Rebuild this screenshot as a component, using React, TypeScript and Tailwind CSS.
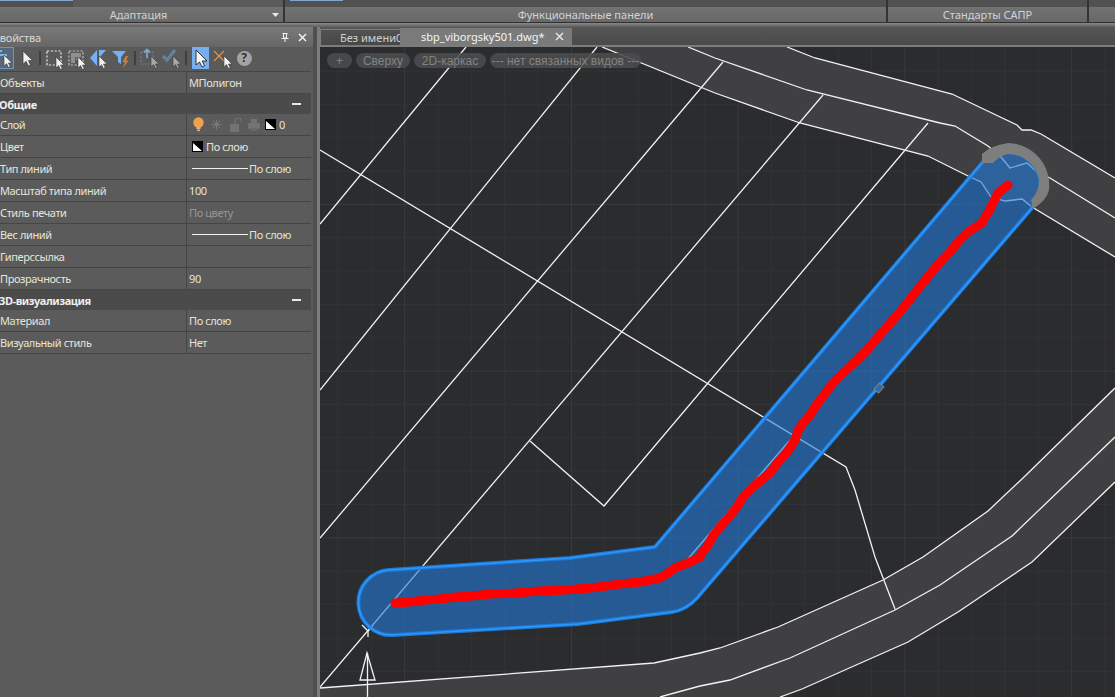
const FONT = "font-['Noto_Sans',sans-serif]";

const Cur = ({ x = 11, y = 8, s = 1, fill = "#f2f2f2" }: { x?: number; y?: number; s?: number; fill?: string }) => (
  <path
    transform={`translate(${x} ${y}) scale(${s})`}
    d="M0 0 L0 11 L2.6 8.6 L4.4 12.5 L6.2 11.6 L4.5 8 L8 8 Z"
    fill={fill}
    stroke="#3a3a3a"
    strokeWidth="0.6"
  />
);

const Ico = ({ children }: { children: React.ReactNode }) => (
  <svg width="22" height="22" viewBox="0 0 22 22" className="shrink-0 overflow-visible">
    <g transform="translate(3 0)">{children}</g>
  </svg>
);

const Sep = () => <div className="w-[2px] h-[14px] bg-[#3f3f3f] mx-[2.5px] shrink-0 self-center" />;

const Toolbar = () => (
  <div className="h-[24px] pb-[2px] flex items-center -ml-[8px] bg-[#5a5a5a]">
    <div className="relative w-[22px] h-[22px] shrink-0 bg-[#58677a] border border-[#6f94bd]">
      <svg width="20" height="20" viewBox="0 0 20 20" className="absolute left-0 top-0">
        <rect x="6" y="2" width="3" height="2" fill="#79b4f5" />
        <rect x="0" y="6" width="14" height="2" fill="#79b4f5" />
        <Cur x={11} y={7} />
      </svg>
    </div>
    <Ico>
      <Cur x={6} y={4} s={1.2} />
    </Ico>
    <Sep />
    <Ico>
      <rect x="1" y="4" width="14" height="14" fill="none" stroke="#e6e6e6" strokeWidth="1.2" strokeDasharray="2.2 1.6" />
      <Cur x={10} y={10} />
    </Ico>
    <Ico>
      <rect x="1" y="4" width="14" height="14" fill="none" stroke="#bdbdbd" strokeWidth="1.2" strokeDasharray="2.2 1.6" />
      <rect x="3" y="6" width="10" height="4" fill="#8f8f8f" />
      <rect x="3" y="10" width="4" height="6" fill="#8f8f8f" />
      <rect x="8" y="10" width="4" height="3" fill="#777" />
      <Cur x={10} y={10} />
    </Ico>
    <Ico>
      <path d="M0 11 L7 3 L7 19 Z" fill="#74b0f5" />
      <path d="M9 3 L16 3 L9 11 Z" fill="#74b0f5" />
      <path d="M10 19 L15 19 L10 15 Z" fill="#74b0f5" />
      <Cur x={9} y={9} />
    </Ico>
    <Ico>
      <path d="M0 4 L14 4 L9 10 L9 17 L6 15 L6 10 Z" fill="#74b0f5" />
      <path d="M14 9 L10.5 15 L13 15 L11 21 L16.5 13.5 L14 13.5 L16 9 Z" fill="#c9853c" />
    </Ico>
    <Sep />
    <Ico>
      <rect x="0" y="5" width="12" height="12" fill="none" stroke="#6f8197" strokeWidth="1.1" strokeDasharray="2.2 1.6" />
      <path d="M6 11 L6 3 M3 5.5 L6 2.5 L9 5.5" fill="none" stroke="#7fa3cc" strokeWidth="1.8" />
      <Cur x={10} y={9} fill="#a8a8a8" />
    </Ico>
    <Ico>
      <path d="M0 9 L4 13 L12 3" fill="none" stroke="#64809f" strokeWidth="3.2" />
      <Cur x={10} y={9} fill="#a8a8a8" />
    </Ico>
    <Sep />
    <div className="relative w-[17px] h-[22px] shrink-0 bg-[#76aef0] mx-[2.5px]">
      <svg width="17" height="22" viewBox="0 0 17 22" className="absolute left-0 top-0">
        <path
          d="M4 3 L4 18 L7.5 15 L10 20 L12.5 18.8 L10.2 14 L15 14 Z"
          fill="#f5f5f5"
          stroke="#222"
          strokeWidth="0.9"
        />
      </svg>
    </div>
    <Ico>
      <path d="M0 4 L10 14 M10 4 L0 14" stroke="#e8944a" strokeWidth="1.1" fill="none" />
      <Cur x={10} y={9} />
    </Ico>
    <div className="w-[22px] h-[22px] flex items-center justify-center shrink-0">
      <div className="w-[15px] h-[15px] rounded-full bg-[#a3a3a3] flex items-center justify-center text-[12px] font-bold text-[#333] leading-none">
        ?
      </div>
    </div>
  </div>
);

const Swatch = () => (
  <svg width="11" height="11" viewBox="0 0 11 11" className="shrink-0">
    <rect width="11" height="11" fill="#000" />
    <path d="M1 2 L10 10 L1 10 Z" fill="#fff" />
  </svg>
);

const Val = ({ children, c = "text-[#e4e4d8]" }: { children: React.ReactNode; c?: string }) => (
  <div className={`pl-[2px] h-full flex items-center ${c}`}>{children}</div>
);

const LineVal = () => (
  <div className="flex items-center h-full pl-[5px]">
    <div className="w-[56px] h-px bg-[#f0f0f0] -mt-px" />
    <span className="ml-px text-[#e4e4d8]">По слою</span>
  </div>
);

const Row = ({ k, children }: { k: string; children?: React.ReactNode }) => (
  <div className="grid grid-cols-[186px_125px] h-[22px] border-b border-[#454545] tracking-[-0.4px]">
    <div className="flex items-center text-[#e6e6da] whitespace-nowrap overflow-hidden">{k}</div>
    <div className="border-l border-[#454545]">{children}</div>
  </div>
);

const Group = ({ t }: { t: string }) => (
  <div className="h-[20px] w-[311px] flex items-center justify-between bg-[#4b4b4b] font-bold text-[#eeeeee] pr-[10px] tracking-[-0.4px]">
    <span className="-ml-px">{t}</span>
    <span className="w-[9px] h-[2px] bg-[#e8e8e8]" />
  </div>
);

const Layer = () => (
  <div className="flex items-center h-full pl-[5px] gap-[6px]">
    <svg width="13" height="15" viewBox="0 0 13 15" className="shrink-0">
      <circle cx="6.5" cy="5.5" r="5.2" fill="#f0a04f" />
      <rect x="4.5" y="10" width="4" height="2" fill="#d9b27c" />
      <rect x="5" y="12.5" width="3" height="1.6" fill="#c8b896" />
    </svg>
    <svg width="11" height="11" viewBox="0 0 11 11" className="shrink-0">
      <path d="M5.5 0.5 V10.5 M0.5 5.5 H10.5 M2 2 L9 9 M9 2 L2 9" stroke="#7a7a7a" strokeWidth="1" />
    </svg>
    <svg width="12" height="14" viewBox="0 0 12 14" className="shrink-0 ml-[2px]">
      <path d="M5 6 V3 a3 3 0 0 1 6 0" fill="none" stroke="#737373" strokeWidth="1.2" />
      <rect x="0" y="6" width="9" height="8" fill="#737373" />
    </svg>
    <svg width="12" height="12" viewBox="0 0 12 12" className="shrink-0">
      <rect x="3" y="0" width="6" height="5" fill="#737373" />
      <rect x="0" y="4" width="12" height="6" rx="1" fill="#737373" />
      <rect x="3" y="9" width="6" height="3" fill="#6a6a6a" />
    </svg>
    <div className="flex items-center gap-[3px] -ml-px">
      <Swatch />
      <span className="text-[#e4e4d8]">0</span>
    </div>
  </div>
);

const Panel = () => (
  <div className="w-[313px] shrink-0 bg-[#5b5b5b] overflow-hidden">
    <div className="h-[20px] flex items-center justify-between bg-gradient-to-b from-[#7a7a7a] to-[#666666] pr-[6px]">
      <span className="-ml-[7px] text-[#d8d8d8] tracking-[-0.2px]">Свойства</span>
      <div className="flex items-center gap-[9px]">
        <svg width="8" height="9" viewBox="0 0 8 9">
          <path d="M1.5 0.5 H6.5 M2.5 0.5 V5 H5.5 V0.5 M0.5 5.5 H7.5 M4 5.5 V9" stroke="#f2f2f2" fill="none" />
        </svg>
        <svg width="9" height="9" viewBox="0 0 9 9">
          <path d="M1 1 L8 8 M8 1 L1 8" stroke="#f2f2f2" strokeWidth="1.5" />
        </svg>
      </div>
    </div>
    <Toolbar />
    <div className="w-[311px] border-t border-[#454545]">
      <Row k="Объекты">
        <Val>МПолигон</Val>
      </Row>
      <Group t="Общие" />
      <Row k="Слой">
        <Layer />
      </Row>
      <Row k="Цвет">
        <div className="flex items-center h-full pl-[5px] gap-[3px]">
          <Swatch />
          <span className="text-[#e4e4d8]">По слою</span>
        </div>
      </Row>
      <Row k="Тип линий">
        <LineVal />
      </Row>
      <Row k="Масштаб типа линий">
        <Val>100</Val>
      </Row>
      <Row k="Стиль печати">
        <Val c="text-[#969696]">По цвету</Val>
      </Row>
      <Row k="Вес линий">
        <LineVal />
      </Row>
      <Row k="Гиперссылка" />
      <Row k="Прозрачность">
        <Val>90</Val>
      </Row>
      <Group t="3D-визуализация" />
      <Row k="Материал">
        <Val>По слою</Val>
      </Row>
      <Row k="Визуальный стиль">
        <Val>Нет</Val>
      </Row>
    </div>
  </div>
);

const Ribbon = () => {
  const cell = "h-[23px] flex flex-col border-r-2 border-[#333333]";
  const label =
    "flex-1 flex items-center justify-center bg-gradient-to-b from-[#727272] to-[#686868] text-[#cfd3d6] border-b border-[#303030]";
  return (
    <div className="flex h-[23px] bg-[#5a5a5a]">
      <div className={`${cell} w-[285px]`}>
        <div className="h-[7px] bg-[#515151] border-t border-[#7fa5d0] mr-[210px]" />
        <div className="relative flex-1 flex flex-col">
          <div className={`${label} relative pr-[6px]`}>
            Адаптация
            <svg width="7" height="4" viewBox="0 0 7 4" className="absolute right-[4px] top-[6px]">
              <path d="M0 0 H7 L3.5 4 Z" fill="#e8e8e8" />
            </svg>
          </div>
        </div>
      </div>
      <div className={`${cell} w-[603px]`}>
        <div className="h-[7px] bg-[#515151] flex">
          <div className="w-[53px] h-px ml-[5px] bg-[#7fa5d0]" />
        </div>
        <div className={label}>Функциональные панели</div>
      </div>
      <div className={`${cell} w-[201px]`}>
        <div className="h-[7px] bg-[#515151]" />
        <div className={label}>Стандарты САПР</div>
      </div>
      <div className="h-[23px] flex-1 flex flex-col">
        <div className="h-[7px] bg-[#515151]" />
        <div className={label} />
      </div>
    </div>
  );
};

const Tabs = () => (
  <div className="h-[20px] flex items-end bg-gradient-to-b from-[#565656] to-[#4a4a4a] border-b-2 border-[#7c7c7c]">
    <div className="h-[16px] w-[80px] pl-[19px] flex items-center bg-gradient-to-b from-[#525252] to-[#474747] border-l border-t border-[#7c7c7c] text-[#cfcfcf] overflow-hidden whitespace-nowrap">
      Без имени0
    </div>
    <div className="h-[17px] w-[172px] pl-[21px] pr-[8px] flex items-center justify-between bg-[#7a7a7a] text-[#f4f4f4]">
      <span>sbp_viborgsky501.dwg*</span>
      <svg width="9" height="9" viewBox="0 0 9 9">
        <path d="M1 1 L8 8 M8 1 L1 8" stroke="#f2f2f2" strokeWidth="1.2" />
      </svg>
    </div>
  </div>
);

const Pill = ({ children, w }: { children: React.ReactNode; w: string }) => (
  <div className={`h-[15px] ${w} rounded-full bg-[#4a4b4c]/90 flex items-center justify-center text-[#838383] whitespace-nowrap font-['Liberation_Sans',sans-serif] text-[12px]`}>
    {children}
  </div>
);

const vx = Array.from({ length: 24 }, (_, i) => 338 + i * 33.35);
const hy = Array.from({ length: 20 }, (_, i) => 71 + i * 33.35);

const lineA = "787,47 815,58 952,94 1017,125 1022,130 1031,130 1041,134 1115,178";
const lineB = "688,47 715,58 807,90 940,123 955,126 988,146 1001,157 1010,168 1027,163 1037,172 1050,178 1115,218";
const lineC = "602,47 715,93 800,123 928,156 970,177 981,182 991,197 1005,201 1022,199 1032,207 1115,257";
const b1 = "320,688 654,663 700,653 720,648 778,627 883,580 923,557 988,511 1023,478 1115,388";
const b2 = "660,697 700,686 730,680 790,658 895,610 940,585 1012,536 1115,437";
const b3 = "780,697 802,689 908,642 958,612 1032,562 1115,482";
const rev = (s: string) => s.split(" ").reverse().join(" ");

const red =
  "395,603 410,602 425,600 440,599 455,597 472,596 490,594 515,593 540,591 565,590 590,588 606,586 620,584 640,582 660,578 668,573 675,568 690,562 700,557 703,551 707,547 713,536 720,527 729,517 737,507 743,497 750,490 760,481 770,473 775,466 780,460 788,451 795,440 798,431 803,423 810,415 815,407 824,395 833,383 838,378 843,373 855,362 867,350 884,330 900,312 918,289 935,268 948,254 960,240 968,232 982,223 985,217 988,213 993,203 998,193 1003,189 1008,185";

const blue =
  "M655 547 L982 163 A33.6 33.6 0 0 1 1032 208 L697 598 Q686 610 672 612 L578 624 L393 635 A32 32 0 0 1 389 570 L570 558 Z";

const Drawing = () => (
  <svg viewBox="320 47 795 650" className="block w-full h-full">
    <rect x="320" y="47" width="795" height="650" fill="#2b2c2e" />
    {vx.map((x, i) => (
      <line key={i} x1={x} y1="47" x2={x} y2="697" stroke={i % 5 === 2 ? "#3a3b43" : "#323338"} strokeWidth="1" />
    ))}
    {hy.map((y, i) => (
      <line key={i} x1="320" y1={y} x2="1115" y2={y} stroke={i % 5 === 4 ? "#3a3b43" : "#323338"} strokeWidth="1" />
    ))}
    <polygon points={`${lineA} 1115,257 ${rev(lineC)}`} fill="#404042" />
    <polygon points={`${b1} 1115,482 ${rev(b3)} 320,697`} fill="#404042" />
    <g fill="none" stroke="#f2f2f2" strokeWidth="1.3">
      <polyline points={lineA} />
      <polyline points={lineB} />
      <polyline points={lineC} />
      <polyline points={b1} />
      <polyline points={b2} />
      <polyline points={b3} />
      <polyline points="466,47 320,224" />
      <polyline points="597,47 320,390" />
      <polyline points="723,62 320,538" />
      <polyline points="823,95 320,687" />
      <polyline points="928,123 604,506 530,441" />
      <polyline points="790,440 687,560" />
      <polyline points="320,150 846,467 855,490 875,557 895,609" />
      <polyline points="362,625 368,631 373,626" />
      <polyline points="368,631 368,637" />
      <polygon points="367,653 360,680 375,680" />
      <line x1="367.5" y1="653" x2="367.5" y2="697" />
    </g>
    <path d={blue} fill="rgba(35,122,216,0.6)" stroke="#1c78d8" strokeWidth="4" strokeLinejoin="round" />
    <path d={blue} fill="none" stroke="#2e98fa" strokeWidth="1.6" strokeLinejoin="round" />
    <path
      d="M982 163 L982 154 Q990 146 1008 143 A42 42 0 0 1 1049 190 Q1047 200 1033 209 L1031 200 Q1039 192 1039 180 A31 31 0 0 0 1008 154 Q999 156 993 163 Z"
      fill="#7e7e7e"
    />
    <polyline points={red} fill="none" stroke="#ff0000" strokeWidth="9" strokeLinecap="round" strokeLinejoin="round" />
    <rect
      x="876"
      y="384"
      width="6"
      height="8"
      transform="rotate(42 879 388)"
      fill="#2a6db5"
      stroke="#808080"
      strokeWidth="1"
    />
  </svg>
);

const Canvas = () => (
  <div className="relative h-[650px] overflow-hidden">
    <Drawing />
    <div className="absolute left-[7px] top-[6px] flex gap-[4px]">
      <Pill w="w-[25px]">+</Pill>
      <Pill w="w-[54px]">Сверху</Pill>
      <Pill w="w-[72px]">2D-каркас</Pill>
      <Pill w="w-[151px]">--- нет связанных видов ---</Pill>
    </div>
  </div>
);

export default function App() {
  return (
    <div className={`w-[1115px] h-[697px] overflow-hidden bg-[#5a5a5a] text-[11px] leading-none ${FONT}`}>
      <Ribbon />
      <div className="h-[4px] bg-gradient-to-b from-[#8a8a8a] to-[#5e5e5e]" />
      <div className="flex h-[670px]">
        <Panel />
        <div className="w-[4px] shrink-0 bg-[#4f4f4f]" />
        <div className="w-[3px] shrink-0 bg-[#7c7c7c]" />
        <div className="flex-1 min-w-0">
          <Tabs />
          <Canvas />
        </div>
      </div>
    </div>
  );
}
